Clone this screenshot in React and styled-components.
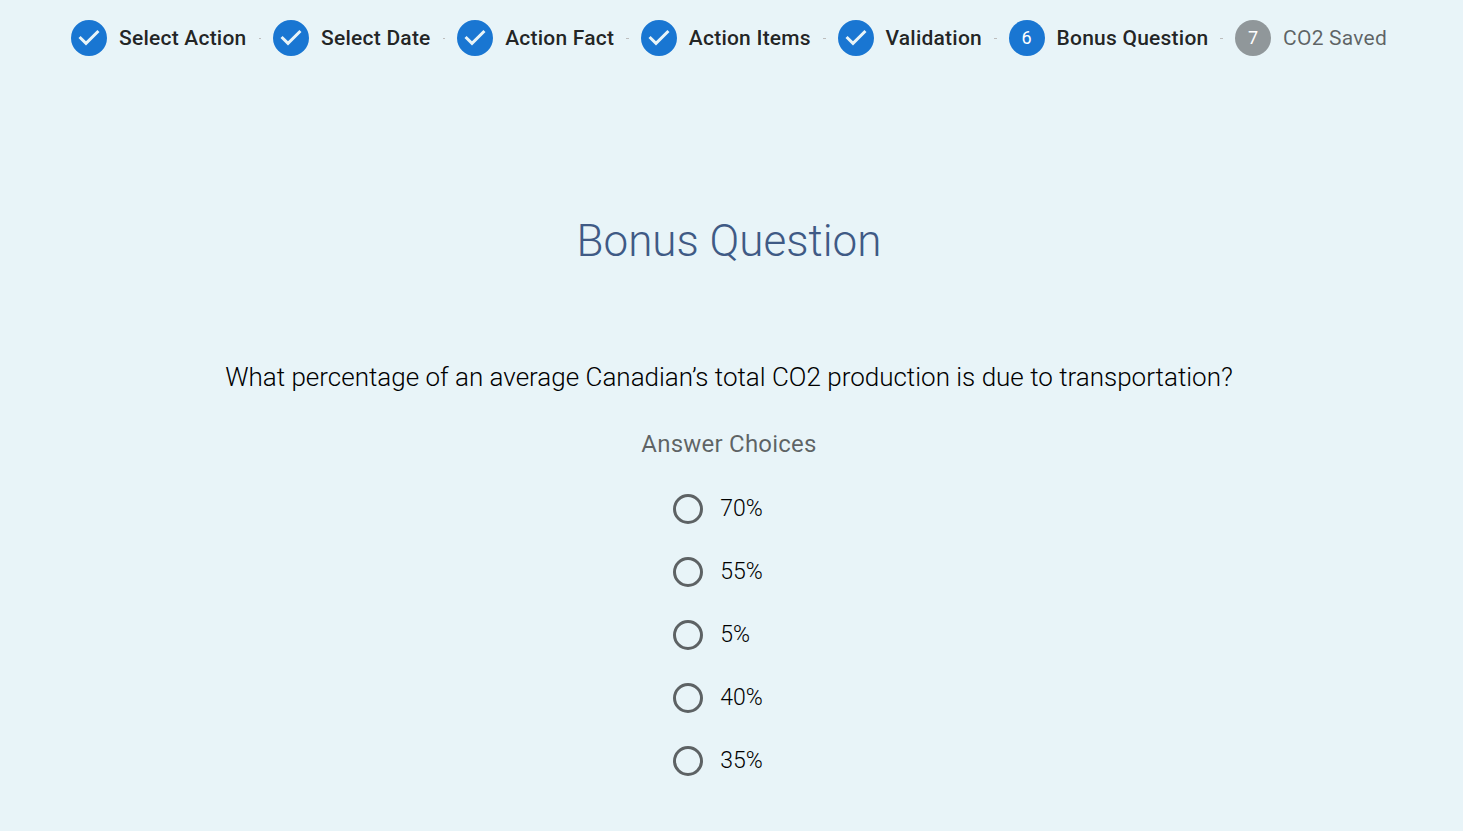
import React, { useState } from "react";
import styled, { createGlobalStyle } from "styled-components";

const GlobalStyle = createGlobalStyle`
  *, *::before, *::after { box-sizing: border-box; }
  body {
    margin: 0;
    background: #fff;
    font-family: Roboto, "Liberation Sans", sans-serif;
  }
`;

const Page = styled.main`
  min-height: 100vh;
  margin-right: 15px;
  padding: 20px 5px 24px 0;
  background: #e8f4f8;
  color: #000;
`;

const Stepper = styled.ol`
  display: flex;
  align-items: center;
  margin: 0;
  padding: 0 59px;
  list-style: none;
`;

const Step = styled.li`
  display: flex;
  align-items: center;
  gap: 12px;
  padding: 0 12px;
  font-size: 21px;
  line-height: 36px;
  letter-spacing: 0.01071em;
  white-space: nowrap;
  font-weight: ${(p) => (p.$pending ? 400 : 500)};
  color: ${(p) => (p.$pending ? "rgba(0, 0, 0, 0.6)" : "rgba(0, 0, 0, 0.87)")};
`;

const Connector = styled.li`
  flex: 1 1 auto;
  height: 1px;
  background: #bdbdbd;
`;

const StepIcon = styled.svg`
  flex: none;
  width: 36px;
  height: 36px;
  fill: #1976d2;
`;

const NumberBadge = styled.span`
  flex: none;
  width: 36px;
  height: 36px;
  border-radius: 50%;
  background: ${(p) => (p.$pending ? "#90979a" : "#1976d2")};
  color: #fff;
  font-size: 18px;
  font-weight: 400;
  letter-spacing: 0;
  text-align: center;
`;

const Title = styled.h1`
  margin: 157px 0 0;
  color: #3f5a85;
  font-size: 44px;
  font-weight: 300;
  line-height: 56px;
  text-align: center;
`;

const Question = styled.p`
  margin: 92px 0 0;
  font-size: 26px;
  font-weight: 300;
  line-height: 32px;
  text-align: center;
`;

const Choices = styled.fieldset`
  display: flex;
  flex-direction: column;
  width: fit-content;
  margin: 34px auto 0;
  padding: 0;
  border: 0;
`;

const Legend = styled.legend`
  padding: 0;
  color: rgba(0, 0, 0, 0.6);
  font-size: 24px;
  line-height: 34px;
  letter-spacing: 0.00938em;
`;

const ChoiceList = styled.div`
  display: flex;
  flex-direction: column;
  padding: 16px 0 0 32px;
`;

const Choice = styled.label`
  display: flex;
  align-items: center;
  gap: 17px;
  height: 63px;
  font-size: 23px;
  font-weight: 300;
  cursor: pointer;
`;

const Radio = styled.input`
  appearance: none;
  flex: none;
  display: grid;
  place-content: center;
  width: 30px;
  height: 30px;
  margin: 0;
  border: 3px solid #5d6264;
  border-radius: 50%;
  cursor: pointer;

  &:checked { border-color: #1976d2; }
  &:checked::before {
    content: "";
    width: 14px;
    height: 14px;
    border-radius: 50%;
    background: #1976d2;
  }
`;

const steps = [
  "Select Action",
  "Select Date",
  "Action Fact",
  "Action Items",
  "Validation",
  "Bonus Question",
  "CO2 Saved",
];
const activeStep = 5;
const answers = ["70%", "55%", "5%", "40%", "35%"];

function CheckIcon() {
  return (
    <StepIcon viewBox="0 0 24 24" aria-hidden="true">
      <path d="M12 0a12 12 0 1 0 0 24 12 12 0 0 0 0-24zm-2 17l-5-5 1.4-1.4 3.6 3.6 7.6-7.6L19 8l-9 9z" />
    </StepIcon>
  );
}

export default function App() {
  const [selected, setSelected] = useState(null);
  return (
    <>
      <GlobalStyle />
      <Page>
        <Stepper>
          {steps.map((label, i) => (
            <React.Fragment key={label}>
              {i > 0 && <Connector aria-hidden="true" />}
              <Step $pending={i > activeStep} aria-current={i === activeStep ? "step" : undefined}>
                {i < activeStep ? (
                  <CheckIcon />
                ) : (
                  <NumberBadge $pending={i > activeStep}>{i + 1}</NumberBadge>
                )}
                <span>{label}</span>
              </Step>
            </React.Fragment>
          ))}
        </Stepper>
        <Title>Bonus Question</Title>
        <Question>
          What percentage of an average Canadian’s total CO2 production is due to transportation?
        </Question>
        <Choices>
          <Legend>Answer Choices</Legend>
          <ChoiceList>
            {answers.map((answer) => (
              <Choice key={answer}>
                <Radio
                  type="radio"
                  name="answer"
                  value={answer}
                  checked={selected === answer}
                  onChange={() => setSelected(answer)}
                />
                {answer}
              </Choice>
            ))}
          </ChoiceList>
        </Choices>
      </Page>
    </>
  );
}
